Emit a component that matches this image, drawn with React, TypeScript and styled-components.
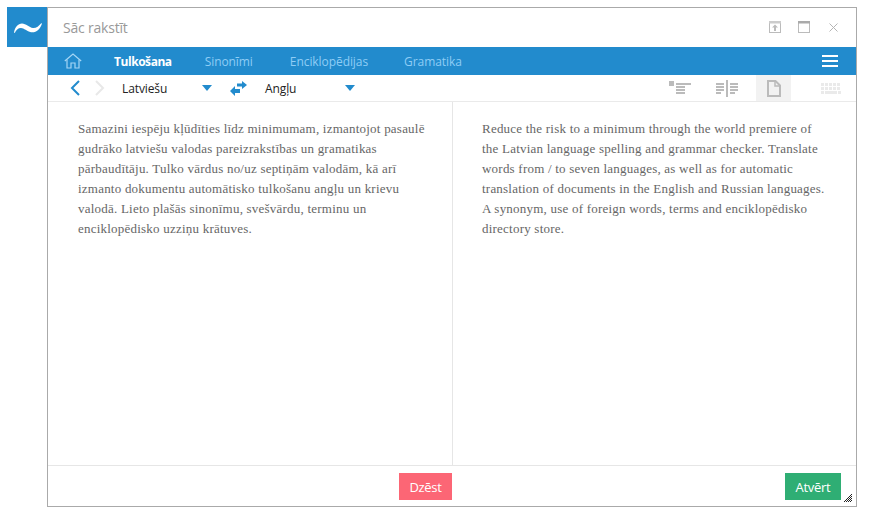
import React from 'react'
import styled, { createGlobalStyle } from 'styled-components'

const GlobalStyle = createGlobalStyle`
  html, body {
    margin: 0;
    padding: 0;
    background: #fff;
  }
  * {
    box-sizing: border-box;
  }
`

const Page = styled.div`
  display: flex;
  align-items: flex-start;
  padding: 7px;
  width: 878px;
  height: 525px;
  font-family: "Open Sans", "Liberation Sans", sans-serif;
`

const Logo = styled.div`
  width: 40px;
  height: 40px;
  background: #228bcd;
  flex-shrink: 0;
  display: flex;
  align-items: center;
  justify-content: center;
  padding: 1px 0 0 1px;
`

const Window = styled.div`
  width: 810px;
  height: 500px;
  border: 1px solid #aaa;
  display: flex;
  flex-direction: column;
  position: relative;
`

const TitleBar = styled.div`
  height: 39px;
  display: flex;
  align-items: center;
  justify-content: space-between;
  padding: 0 18px 0 15px;
`

const Title = styled.div`
  font-size: 14px;
  letter-spacing: -0.2px;
  color: #999;
`

const WindowControls = styled.div`
  display: flex;
  align-items: center;
  gap: 17px;
  margin-top: -1px;
  svg:last-child {
    margin-left: 2px;
  }
`

const NavBar = styled.div`
  height: 28px;
  background: #228bcd;
  display: flex;
  align-items: center;
  padding: 0 18px 0 16px;
`

const NavLink = styled.span<{ $active?: boolean; $gap: number }>`
  font-size: 12px;
  font-weight: ${p => (p.$active ? 700 : 400)};
  letter-spacing: ${p => (p.$active ? '-0.45px' : '-0.07px')};
  color: ${p => (p.$active ? '#fff' : '#8fcdf5')};
  margin-left: ${p => p.$gap}px;
`

const Burger = styled.div`
  margin-left: auto;
  width: 16px;
  height: 12px;
  border-top: 2px solid #fff;
  border-bottom: 2px solid #fff;
  position: relative;
  &::after {
    content: '';
    position: absolute;
    left: 0;
    right: 0;
    top: 3px;
    height: 2px;
    background: #fff;
  }
`

const ToolBar = styled.div`
  height: 27px;
  border-bottom: 1px solid #eaeaea;
  display: flex;
  align-items: center;
  padding-left: 22px;
`

const NavGroup = styled.div`
  display: flex;
  align-items: center;
  gap: 15px;
  margin-right: 17px;
`

const LangName = styled.span`
  font-size: 12px;
  letter-spacing: -0.1px;
  color: #222;
  width: 80px;
`

const Caret = styled.span`
  width: 0;
  height: 0;
  border-left: 5px solid transparent;
  border-right: 5px solid transparent;
  border-top: 6px solid #228bcd;
`

const SwapWrap = styled.span`
  display: flex;
  margin: 0 18px;
`

const ViewButtons = styled.div`
  margin-left: auto;
  display: flex;
  align-items: stretch;
  height: 26px;
`

const ViewButton = styled.div<{ $active?: boolean; $width: number; $pad: number }>`
  width: ${p => p.$width}px;
  padding-left: ${p => p.$pad}px;
  display: flex;
  align-items: center;
  background: ${p => (p.$active ? '#f2f2f2' : 'transparent')};
`

const Panes = styled.div`
  flex: 1;
  display: grid;
  grid-template-columns: 405px 1fr;
  min-height: 0;
`

const Pane = styled.div<{ $left?: boolean }>`
  padding: ${p => (p.$left ? '17px 24px 0 30px' : '17px 28px 0 29px')};
  border-right: ${p => (p.$left ? '1px solid #e6e6e6' : 'none')};
  font-family: "Liberation Serif", "Times New Roman", serif;
  font-size: 13px;
  letter-spacing: 0.22px;
  line-height: 20px;
  color: #666;
`

const Footer = styled.div`
  height: 41px;
  border-top: 1px solid #e6e6e6;
  display: grid;
  grid-template-columns: 405px 1fr;
`

const FooterCell = styled.div<{ $pad: number }>`
  display: flex;
  justify-content: flex-end;
  padding: 7px ${p => p.$pad}px 0 0;
`

const ActionButton = styled.button<{ $color: string; $width: number }>`
  width: ${p => p.$width}px;
  height: 27px;
  border: 0;
  padding: 0;
  background: ${p => p.$color};
  color: #fff;
  font-family: "Open Sans", "Liberation Sans", sans-serif;
  font-size: 13px;
  letter-spacing: -0.3px;
`

const ResizeGrip = styled.svg`
  position: absolute;
  right: 4px;
  bottom: 4px;
`

const Tilde = () => (
  <svg width="28" height="10" viewBox="0 0 28 10">
    <path
      d="M0 9.5 C1 4 4 0.5 8 0.5 C12 0.5 15 4.5 19 5 C22 5.3 25 3 27.2 0.2 L28 0.5 C26 6.5 22 10 17 9.2 C13 8.5 10 5 7 5 C4 5 2 7 0.8 10 Z"
      fill="#fff"
    />
  </svg>
)

const HomeIcon = () => (
  <svg width="18" height="16" viewBox="0 0 18 16" fill="none" stroke="#a5d6f5" strokeWidth="1.2">
    <path d="M0.8 8 L9 1 L17.2 8" />
    <path d="M3 6.6 V15 H7 V10 H11 V15 H15 V6.6" />
  </svg>
)

const Chevron = ({ left, color }: { left?: boolean; color: string }) => (
  <svg width="10" height="16" viewBox="0 0 10 16" fill="none" stroke={color} strokeWidth="2">
    <path d={left ? 'M9 1 L2 8 L9 15' : 'M1 1 L8 8 L1 15'} />
  </svg>
)

const SwapIcon = () => (
  <svg width="17" height="15" viewBox="0 0 17 15" fill="#228bcd">
    <path d="M7 2.5 H12 V0 L17 4 L12 8 V5.5 H7 Z" />
    <path d="M10 8 H5 V5 L0 10 L5 15 V12 H10 Z" />
  </svg>
)

const RestoreIcon = () => (
  <svg width="12" height="12" viewBox="0 0 12 12">
    <rect x="0.5" y="0.5" width="11" height="11" fill="none" stroke="#bbb" />
    <rect x="0" y="0" width="12" height="2.5" fill="#ccc" />
    <path d="M6 3.5 L9 6.5 H7 V10 H5 V6.5 H3 Z" fill="#bbb" />
  </svg>
)

const MaximizeIcon = () => (
  <svg width="12" height="12" viewBox="0 0 12 12">
    <rect x="0.5" y="0.5" width="11" height="11" fill="none" stroke="#bbb" />
    <rect x="0" y="0" width="12" height="2.5" fill="#aaa" />
  </svg>
)

const CloseIcon = () => (
  <svg width="9" height="9" viewBox="0 0 9 9" stroke="#b5b5b5" strokeWidth="1">
    <path d="M0.5 0.5 L8.5 8.5 M8.5 0.5 L0.5 8.5" />
  </svg>
)

const ParagraphIcon = () => (
  <svg width="22" height="15" viewBox="0 0 22 15" fill="#bbb">
    <rect x="0" y="0" width="5" height="5" />
    <rect x="7" y="2" width="15" height="2" />
    <rect x="7" y="5" width="9" height="2" />
    <rect x="7" y="8" width="9" height="2" />
    <rect x="7" y="11" width="9" height="2" />
  </svg>
)

const ColumnsIcon = () => (
  <svg width="22" height="17" viewBox="0 0 22 17" fill="#bbb">
    <rect x="10" y="0" width="2" height="17" />
    <rect x="0" y="3" width="8" height="2" />
    <rect x="0" y="6" width="8" height="2" />
    <rect x="0" y="9" width="8" height="2" />
    <rect x="0" y="12" width="5" height="2" />
    <rect x="14" y="3" width="8" height="2" />
    <rect x="14" y="6" width="8" height="2" />
    <rect x="14" y="9" width="8" height="2" />
    <rect x="14" y="12" width="5" height="2" />
  </svg>
)

const PageIcon = () => (
  <svg width="14" height="17" viewBox="0 0 14 17" fill="none" stroke="#bbb" strokeWidth="2">
    <path d="M1 1 H8.5 L13 5.5 V16 H1 Z" />
    <path d="M8 1 V6 H13" strokeWidth="1.5" />
  </svg>
)

const KeyboardIcon = () => (
  <svg width="20" height="11" viewBox="0 0 20 11" fill="#eaeaea">
    {[0, 4].map(y =>
      [0, 4, 8, 12, 16].map(x => <rect key={`${x}-${y}`} x={x} y={y} width="3" height="3" />)
    )}
    <rect x="0" y="8" width="3" height="3" />
    <rect x="4" y="8" width="12" height="3" />
    <rect x="17" y="8" width="3" height="3" />
  </svg>
)

const gripCells: [number, number][] = []
for (let y = 0; y < 8; y++) {
  for (let x = 7 - y; x < 8; x++) {
    if ((x + y) % 2 === 1) gripCells.push([x, y])
  }
}

export default function App() {
  return (
    <Page>
      <GlobalStyle />
      <Logo>
        <Tilde />
      </Logo>
      <Window>
        <TitleBar>
          <Title>Sāc rakstīt</Title>
          <WindowControls>
            <RestoreIcon />
            <MaximizeIcon />
            <CloseIcon />
          </WindowControls>
        </TitleBar>
        <NavBar>
          <HomeIcon />
          <NavLink $active $gap={32}>Tulkošana</NavLink>
          <NavLink $gap={33}>Sinonīmi</NavLink>
          <NavLink $gap={37}>Enciklopēdijas</NavLink>
          <NavLink $gap={36}>Gramatika</NavLink>
          <Burger />
        </NavBar>
        <ToolBar>
          <NavGroup>
            <Chevron left color="#228bcd" />
            <Chevron color="#e8e8e8" />
          </NavGroup>
          <LangName>Latviešu</LangName>
          <Caret />
          <SwapWrap>
            <SwapIcon />
          </SwapWrap>
          <LangName>Angļu</LangName>
          <Caret />
          <ViewButtons>
            <ViewButton $width={47} $pad={13}><ParagraphIcon /></ViewButton>
            <ViewButton $width={53} $pad={13}><ColumnsIcon /></ViewButton>
            <ViewButton $width={35} $pad={11} $active><PageIcon /></ViewButton>
            <ViewButton $width={65} $pad={30}><KeyboardIcon /></ViewButton>
          </ViewButtons>
        </ToolBar>
        <Panes>
          <Pane $left>
            Samazini iespēju kļūdīties līdz minimumam, izmantojot pasaulē gudrāko latviešu valodas pareizrakstības un gramatikas pārbaudītāju. Tulko vārdus no/uz septiņām valodām, kā arī izmanto dokumentu automātisko tulkošanu angļu un krievu valodā. Lieto plašās sinonīmu, svešvārdu, terminu un enciklopēdisko uzziņu krātuves.
          </Pane>
          <Pane>
            Reduce the risk to a minimum through the world premiere of the Latvian language spelling and grammar checker. Translate words from / to seven languages, as well as for automatic translation of documents in the English and Russian languages. A synonym, use of foreign words, terms and enciklopēdisko directory store.
          </Pane>
        </Panes>
        <Footer>
          <FooterCell $pad={1}>
            <ActionButton $color="#fc6675" $width={53}>Dzēst</ActionButton>
          </FooterCell>
          <FooterCell $pad={15}>
            <ActionButton $color="#2fae74" $width={56}>Atvērt</ActionButton>
          </FooterCell>
        </Footer>
        <ResizeGrip width="8" height="8" viewBox="0 0 8 8">
          {gripCells.map(([x, y]) => (
            <rect key={`${x}-${y}`} x={x} y={y} width="1" height="1" fill="#222" />
          ))}
        </ResizeGrip>
      </Window>
    </Page>
  )
}
